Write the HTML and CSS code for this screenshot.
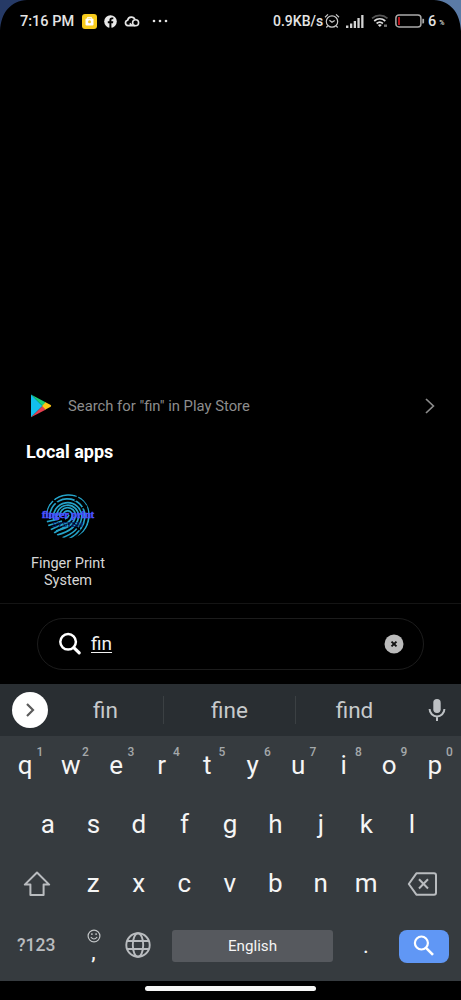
FILE: index.html
```
<!DOCTYPE html>
<html lang="en">
<head>
<meta charset="utf-8">
<title>App search</title>
<link rel="stylesheet" href="styles.css">
</head>
<body>
<div class="phone">
  <svg class="corner corner-left" width="30" height="36" viewBox="0 0 30 36"><path d="M0 0H27C11 1 1 12 0 31Z" fill="#263a66"/></svg>
  <svg class="corner corner-right" width="30" height="36" viewBox="0 0 30 36"><path d="M30 0H3C19 1 29 12 30 31Z" fill="#5b7ba6"/></svg>
  <header class="status">
    <span class="time">7:16 PM</span>
    <svg class="st-app" width="15" height="15" viewBox="0 0 15 15"><rect width="15" height="15" rx="3" fill="#f8cb1c"/><rect x="3.5" y="4.5" width="8" height="7" rx="1" fill="#fff"/><path d="M5.5 4.7V3.4h4v1.3" fill="none" stroke="#fff"/><circle cx="7.5" cy="7.8" r="1.5" fill="#f3c928"/></svg>
    <svg class="st-fb" width="13" height="13" viewBox="0 0 13 13"><circle cx="6.5" cy="6.5" r="6.3" fill="#e8e8e8"/><path d="M5.4 13V8.2H3.8V6.3h1.6V5.2c0-1.9 1-2.7 2.5-2.7h1.4v1.7h-.9c-.8 0-1 .4-1 1.1v1h1.9L9 8.2H7.4V13Z" fill="#000"/></svg>
    <svg class="st-cloud" width="16" height="13" viewBox="0 0 16 13"><path d="M11.2 10.7H4A2.8 2.8 0 0 1 3.6 5.2 3.9 3.9 0 0 1 11 4.5M8 10.5 5.8 8.3" fill="none" stroke="#e4e4e4" stroke-width="1.7"/><circle cx="11.6" cy="7.7" r="3" fill="none" stroke="#e4e4e4" stroke-width="1.6"/></svg>
    <svg class="st-dots" width="16" height="4" viewBox="0 0 16 4" fill="#e4e4e4"><circle cx="2" cy="2" r="1.3"/><circle cx="8" cy="2" r="1.3"/><circle cx="14" cy="2" r="1.3"/></svg>
    <span class="rate">0.9KB/s</span>
    <svg class="st-alarm" width="16" height="16" viewBox="0 0 16 16" fill="none" stroke="#c8c8c8" stroke-width="1.2"><circle cx="8" cy="8.5" r="5.7"/><path d="M5.4 7.3 8 9.3l2.7-1.7M1 4.2 4 1.4M15 4.2 12 1.4M3.7 13 2.3 14.5M12.3 13l1.4 1.5"/></svg>
    <svg class="st-signal" width="18" height="13" viewBox="0 0 18 13" fill="#d2d2d2"><path d="M0 10.5h2.4V13H0zM4 8.5h2.3V13H4zM7.7 6H10v7H7.7zM11.4 3h2.3v10h-2.3zM15.2 0h2.3v13h-2.3z"/></svg>
    <svg class="st-wifi" width="18" height="14" viewBox="0 0 18 14" fill="none"><path d="M1 4.4C5.5.4 12 .4 16.5 4.4" stroke="#555" stroke-width="1.6"/><path d="M3.2 7C6.6 4 11 4 14.3 7M5.6 9.5c2-1.7 4.3-1.7 6.3 0" stroke="#ddd" stroke-width="1.7"/><path d="m8.8 13-2-2q2-1.4 4 0Z" fill="#ddd"/><path d="M13 10.5h3v2.4h-3z" fill="#777"/></svg>
    <svg class="st-batt" width="30" height="14" viewBox="0 0 30 14"><rect x=".9" y=".9" width="25" height="12" rx="3" fill="none" stroke="#aaa" stroke-width="1.5"/><path d="M3 3h2v8H3z" fill="#b51218"/><path d="M27.3 4.8h1q.8 0 .8.8v3q0 .8-.8.8h-1z" fill="#aaa"/></svg>
    <span class="pct">6</span><span class="pct-sign">%</span>
  </header>

  <main class="results">
    <div class="store">
      <svg width="22" height="24" viewBox="0 0 22 24"><path d="M1 .5v22.8L12.5 12Z" fill="#12c0ee"/><path d="M1 .5 16 8.4 12.5 12Z" fill="#19cf79"/><path d="M1 23.3 16 15.4 12.5 12Z" fill="#e43f4f"/><path d="m15.5 8.2 5.2 2.9q1 .8 0 1.6l-5.2 2.9L12 12Z" fill="#fbc614"/></svg>
      <span class="store-text">Search for "fin" in Play Store</span>
      <svg width="12" height="18" viewBox="0 0 12 18"><path d="m2 2 7.4 7L2 16" fill="none" stroke="#8b8b8b" stroke-width="1.7"/></svg>
    </div>
    <h1 class="heading">Local apps</h1>
    <div class="app">
      <svg class="app-icon" width="56" height="46" viewBox="0 0 56 46">
        <defs><clipPath id="round"><ellipse cx="28" cy="23" rx="22" ry="22.3"/></clipPath></defs>
        <g clip-path="url(#round)" fill="none" stroke="#25a3c9" stroke-width="1.65">
          <path d="M25 26q3-1 4-4"/>
          <path d="M23 22a4.6 4.6 0 1 1 9.2 1C31 29 26 31 19 33"/>
          <path d="M20 24a7.8 7.8 0 1 1 15.4-1C34 32 27 35 16 38"/>
          <path d="M17 26a11 11 0 1 1 21.6-2C37 34 29 39 17 42"/>
          <path d="M14 28a14.2 14.2 0 1 1 27.8-4C40 36 32 41 22 45"/>
          <path d="M10 26a17.6 17.6 0 1 1 35-2C44 34 38 41 29 46"/>
          <path d="M6 25C6-5 49-5 49 21 49 33 44 40 35 46"/>
          <path d="M5 29 19 26M7 33l15-5M10 37l15-7M14 40l14-8"/>
        </g>
        <path d="m12 6 6 5M38 3l-3 5M47 13l-5 2M40 37l-5-4" stroke="#000" stroke-width="1.8"/>
        <text class="icon-sub" x="12" y="34" textLength="31">SYSTEM</text>
        <text class="icon-title" x="2" y="25.2" textLength="52" lengthAdjust="spacingAndGlyphs">finger print</text>
      </svg>
      <span class="app-name">Finger Print<br>System</span>
    </div>
  </main>

  <section class="search">
    <div class="field">
      <svg width="24" height="24" viewBox="0 0 24 24" fill="none" stroke="#fff"><circle cx="10.1" cy="9.8" r="7.8" stroke-width="2.5"/><path d="m15.8 15.6 5.4 5.3" stroke-width="3.2" stroke-linecap="round"/></svg>
      <span class="query">fin</span>
      <svg width="20" height="20" viewBox="0 0 20 20"><circle cx="10" cy="10" r="9.5" fill="#bbb"/><path d="m7.5 7.6 5 4.8m0-4.8-5 4.8" stroke="#111" stroke-width="2"/></svg>
    </div>
  </section>

  <section class="suggest">
    <svg class="expand" width="36" height="36" viewBox="0 0 36 36"><circle cx="18" cy="18" r="18" fill="#fff"/><path d="m15 12 6 6-6 6" fill="none" stroke="#5c5c5c" stroke-width="2.2"/></svg>
    <span class="word">fin</span>
    <span class="word word-mid">fine</span>
    <span class="word">find</span>
    <svg class="mic" width="18" height="24" viewBox="0 0 18 24"><rect x="5.3" y="1" width="7.4" height="14" rx="3.7" fill="#bdc1c4"/><path d="M1.6 11a7.4 7.4 0 0 0 14.8 0M9 18.3V23" fill="none" stroke="#bdc1c4" stroke-width="2"/></svg>
  </section>

  <section class="keyboard">
    <div class="row row-top">
      <span class="key">q<sup>1</sup></span><span class="key">w<sup>2</sup></span><span class="key">e<sup>3</sup></span><span class="key">r<sup>4</sup></span><span class="key">t<sup>5</sup></span><span class="key">y<sup>6</sup></span><span class="key">u<sup>7</sup></span><span class="key">i<sup>8</sup></span><span class="key">o<sup>9</sup></span><span class="key">p<sup>0</sup></span>
    </div>
    <div class="row row-home">
      <span class="key">a</span><span class="key">s</span><span class="key">d</span><span class="key">f</span><span class="key">g</span><span class="key">h</span><span class="key">j</span><span class="key">k</span><span class="key">l</span>
    </div>
    <div class="row row-low">
      <span class="key wide"><svg width="28" height="26" viewBox="0 0 28 26"><path d="M14 1.5 1.8 13.6H7.4V24H20.6V13.6H26.2Z" fill="none" stroke="#b9bcbf" stroke-width="2" stroke-linejoin="round"/></svg></span>
      <span class="key">z</span><span class="key">x</span><span class="key">c</span><span class="key">v</span><span class="key">b</span><span class="key">n</span><span class="key">m</span>
      <span class="key wide"><svg width="32" height="26" viewBox="0 0 32 26" fill="none" stroke="#b9bcbf" stroke-width="2"><path d="M9.4 2.3H27q2 0 2 2v17.4q0 2-2 2H9.4L1.8 13Z" stroke-linejoin="round"/><path d="m12 8.3 9 9.2m0-9.2-9 9.2"/></svg></span>
    </div>
    <div class="row row-bottom">
      <span class="sym">?123</span>
      <span class="comma"><svg width="14" height="14" viewBox="0 0 14 14" fill="none" stroke="#c2c5c7" stroke-width="1.2"><circle cx="7" cy="7" r="5.9"/><path d="M3.8 8q3.2 4 6.4 0"/><path d="M4.9 4.3v1.6M9.1 4.3v1.6" stroke-width="1.4"/></svg><b>,</b></span>
      <svg class="globe" width="26" height="26" viewBox="0 0 26 26" fill="none" stroke="#b9bcbf" stroke-width="1.9"><circle cx="13" cy="13" r="11.7"/><ellipse cx="13" cy="13" rx="5.2" ry="11.7"/><path d="M2 9h22M2 17h22"/></svg>
      <span class="space">English</span>
      <span class="dot">.</span>
      <span class="go"><svg width="24" height="24" viewBox="0 0 24 24" fill="none" stroke="#fff"><circle cx="9.4" cy="9" r="6.5" stroke-width="2.2"/><path d="m14 13.8 7 7" stroke-width="2.6"/></svg></span>
    </div>
  </section>
  <footer class="nav"><i class="handle"></i></footer>
</div>
</body>
</html>
```
FILE: styles.css
```
* { box-sizing: border-box; }
body { margin: 0; background: #000; font-family: Roboto, "Liberation Sans", sans-serif; }
svg { display: block; flex: none; }
.phone { position: relative; display: flex; flex-direction: column; width: 461px; height: 1000px; overflow: hidden; background: #000; }
.corner { position: absolute; top: 0; }
.corner-left { left: 0; }
.corner-right { right: 0; }

.status { display: flex; align-items: center; height: 42px; padding-left: 20px; color: #e4e4e4; font-size: 14.5px; font-weight: 500; white-space: nowrap; }
.time { width: 62px; }
.st-fb { margin-left: 7px; }
.st-cloud { margin-left: 7px; }
.st-dots { margin-left: 12px; }
.rate { width: 51px; margin-left: 105px; font-size: 14px; }
.st-alarm { margin-left: 0; }
.st-signal { margin-left: 6px; }
.st-wifi { margin-left: 7px; }
.st-batt { margin-left: 6px; }
.pct { margin-left: 3px; }
.pct-sign { margin: 4px 0 0 3px; font-size: 7px; }

.results { flex: 1; padding-top: 350px; border-bottom: 1px solid #141414; }
.store { display: flex; align-items: center; height: 28px; padding: 0 25px 0 30px; }
.store-text { flex: 1; margin-left: 16px; font-size: 14.8px; color: #8d8d8d; }
.heading { margin: 20px 0 0 26px; font-size: 18px; line-height: 24px; font-weight: 700; color: #fff; }
.app { display: flex; flex-direction: column; align-items: center; width: 84px; margin: 29px 0 0 26px; }
.app-name { margin-top: 16px; font-size: 14.5px; line-height: 17.3px; text-align: center; color: #d6d6d6; }
.icon-title { font: 700 10px "Liberation Serif", serif; fill: #4a55ff; stroke: #4a50ff; stroke-width: .5; }
.icon-sub { font: italic 700 8px "Liberation Sans", sans-serif; fill: #071f68; }

.search { height: 80px; padding: 14px 37px 0; }
.field { display: flex; align-items: center; height: 52px; padding: 0 19px 0 20px; border: 1px solid #1c1c1c; border-radius: 26px; }
.query { flex: 1; margin-left: 9px; font-size: 19px; line-height: 24px; color: #f2f2f2; text-decoration: underline; text-decoration-thickness: 1px; text-underline-offset: 2px; }

.suggest { display: grid; grid-template-columns: 36px 115px 133px 117px 48px; align-items: center; height: 52px; padding-left: 12px; background: #292e32; color: #c7cacc; }
.word { font-size: 22.5px; line-height: 28px; text-align: center; }
.word-mid { border: solid #3b4043; border-width: 0 1px; }
.mic { justify-self: center; }

.keyboard { height: 245px; background: #363b3f; color: #f5f5f5; }
.row { display: flex; height: 59px; }
.row-top { padding-left: 2.5px; }
.row-home { padding-left: 25.2px; }
.key { position: relative; flex: none; display: flex; justify-content: center; width: 45.5px; font-size: 26px; line-height: 59px; }
.key sup { position: absolute; left: 34px; top: 9px; font-size: 12px; line-height: 14px; font-weight: 500; color: #a4a8aa; }
.wide { width: 68px; align-items: center; }
.row-low { padding-left: 2.5px; }
.row-bottom { align-items: center; height: 64px; padding-left: 17px; }
.sym { width: 62px; font-size: 17.5px; font-weight: 500; color: #b9bcbf; }
.comma { display: flex; flex-direction: column; align-items: center; width: 29px; font-size: 20px; line-height: 18px; }
.comma b { font-weight: 500; }
.globe { margin-left: 17px; }
.space { display: flex; align-items: center; justify-content: center; width: 161px; height: 32px; margin: 2px 0 0 21px; border-radius: 3px; background: #56595e; font-size: 15.2px; }
.dot { width: 66px; font-size: 22px; text-align: center; }
.go { display: flex; align-items: center; justify-content: center; width: 50px; height: 33px; margin-top: 2px; border-radius: 8px; background: #6097f5; }
.nav { display: flex; justify-content: center; height: 19px; padding-top: 5px; }
.handle { width: 171px; height: 5px; border-radius: 3px; background: #f6f6f6; }
```
